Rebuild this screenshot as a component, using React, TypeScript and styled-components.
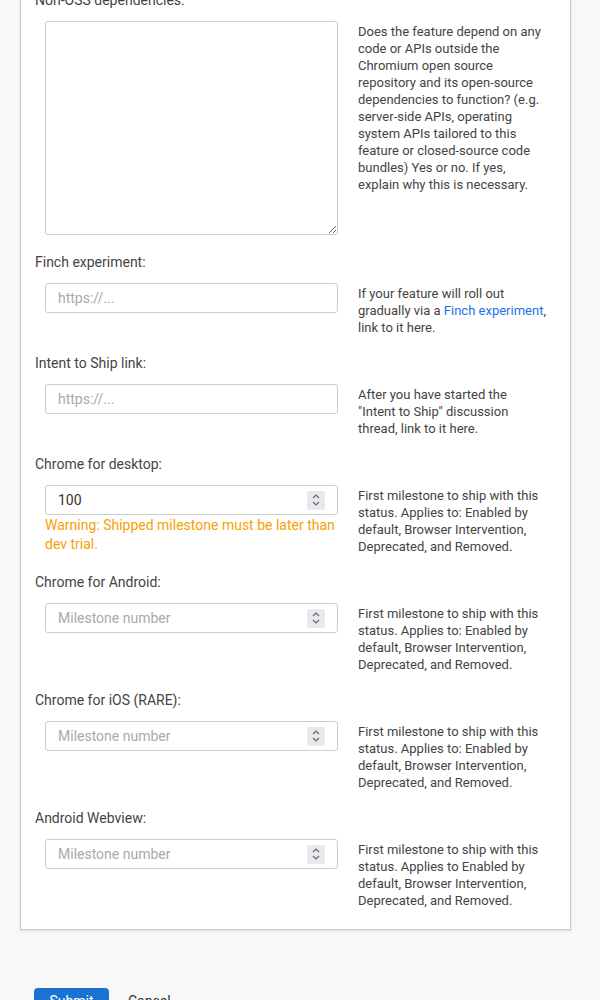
import React from "react";
import styled, { createGlobalStyle } from "styled-components";

const GlobalStyle = createGlobalStyle`
  html, body {
    margin: 0;
    padding: 0;
    background: #f8f8f8;
    font-family: Roboto, "Liberation Sans", Arial, sans-serif;
    color: #444;
  }
  * { box-sizing: border-box; }
`;

const Page = styled.div`
  padding: 0 29px 40px 20px;
  overflow: hidden;
  height: 1000px;
`;

const Card = styled.section`
  margin-top: -27px;
  background: #fff;
  border: 1px solid #ccc;
  box-shadow: 0 1px 2px rgba(0, 0, 0, 0.12);
  padding: 16px 14px 20px 14px;
  display: flex;
  flex-direction: column;
  gap: 17px;
`;

const Field = styled.div`
  display: flex;
  flex-direction: column;
  gap: 11px;
`;

const Label = styled.label`
  font-size: 14px;
  line-height: 20px;
  color: #444;
`;

const Row = styled.div`
  display: grid;
  grid-template-columns: 293px 188px;
  column-gap: 20px;
  padding-left: 10px;
  align-items: start;
`;

const Control = styled.div`
  display: flex;
  flex-direction: column;
`;

const TextArea = styled.textarea`
  width: 293px;
  height: 214px;
  border: 1px solid #ccc;
  border-radius: 3px;
  font: inherit;
  font-size: 13px;
  padding: 6px 12px;
  resize: vertical;
  outline: none;
`;

const Input = styled.input`
  width: 293px;
  height: 30px;
  border: 1px solid #ccc;
  border-radius: 3px;
  font: inherit;
  font-size: 14px;
  color: #333;
  padding: 0 12px;
  outline: none;
  &::placeholder { color: #aaa; }
`;

const NumberBox = styled.div`
  width: 293px;
  height: 30px;
  border: 1px solid #ccc;
  border-radius: 3px;
  display: flex;
  align-items: center;
  padding: 0 12px 0 12px;
`;

const NumberInput = styled.input`
  flex: 1;
  min-width: 0;
  border: none;
  outline: none;
  font: inherit;
  font-size: 14px;
  color: #333;
  padding: 0;
  &::placeholder { color: #aaa; }
`;

const Spinner = styled.span`
  width: 18px;
  height: 19px;
  background: #e9e9ed;
  border-radius: 2px;
  display: flex;
  align-items: center;
  justify-content: center;
`;

const Help = styled.div`
  font-size: 13px;
  line-height: 17px;
  padding-top: 2px;
  color: #444;
`;

const NoWrap = styled.span`
  white-space: nowrap;
`;

const Link = styled.a`
  color: #1a73e8;
  text-decoration: none;
`;

const Warning = styled.div`
  color: #f9a000;
  font-size: 14px;
  line-height: 19px;
  padding-top: 1px;
`;

const Actions = styled.div`
  margin-top: 58px;
  padding-left: 14px;
  display: flex;
  align-items: flex-start;
  gap: 19px;
`;

const Submit = styled.button`
  background: #1a73d2;
  color: #fff;
  border: none;
  border-radius: 4px;
  height: 30px;
  width: 75px;
  padding: 3px 0 0;
  display: flex;
  justify-content: center;
  align-items: flex-start;
  font: inherit;
  font-size: 14px;
  line-height: 20px;
`;

const Cancel = styled.button`
  background: none;
  border: none;
  color: #333;
  font: inherit;
  font-size: 14px;
  line-height: 20px;
  padding: 3px 0 0;
`;

const SpinIcon = () => (
  <Spinner>
    <svg width="10" height="14" viewBox="0 0 10 14" fill="none" stroke="#666" strokeWidth="1.2">
      <path d="M2 5 L5 2 L8 5" />
      <path d="M2 9 L5 12 L8 9" />
    </svg>
  </Spinner>
);

const milestoneHelp =
  "First milestone to ship with this status. Applies to: Enabled by default, Browser Intervention, Deprecated, and Removed.";

const milestones = [
  { label: "Chrome for Android:", help: milestoneHelp },
  { label: "Chrome for iOS (RARE):", help: milestoneHelp },
  {
    label: "Android Webview:",
    help: "First milestone to ship with this status. Applies to Enabled by default, Browser Intervention, Deprecated, and Removed.",
  },
];

export default function App() {
  return (
    <Page>
      <GlobalStyle />
      <Card>
        <Field>
          <Label>Non-OSS dependencies:</Label>
          <Row>
            <TextArea />
            <Help>
              Does the feature depend on any code or APIs outside the Chromium
              open source repository and its open-source dependencies to
              function? (e.g. server-side APIs, operating system APIs tailored
              to this feature or closed-source code bundles) Yes or no. If yes,
              explain why this is necessary.
            </Help>
          </Row>
        </Field>

        <Field>
          <Label>Finch experiment:</Label>
          <Row>
            <Input placeholder="https://..." />
            <Help>
              If your feature will roll out{" "}
              <NoWrap>
                gradually via a <Link href="#">Finch experiment</Link>,
              </NoWrap>{" "}
              link to it here.
            </Help>
          </Row>
        </Field>

        <Field>
          <Label>Intent to Ship link:</Label>
          <Row>
            <Input placeholder="https://..." />
            <Help>
              After you have started the "Intent to Ship" discussion thread,
              link to it here.
            </Help>
          </Row>
        </Field>

        <Field>
          <Label>Chrome for desktop:</Label>
          <Row>
            <Control>
              <NumberBox>
                <NumberInput defaultValue="100" />
                <SpinIcon />
              </NumberBox>
              <Warning>
                Warning: Shipped milestone must be later than dev trial.
              </Warning>
            </Control>
            <Help>{milestoneHelp}</Help>
          </Row>
        </Field>

        {milestones.map((m) => (
          <Field key={m.label}>
            <Label>{m.label}</Label>
            <Row>
              <NumberBox>
                <NumberInput placeholder="Milestone number" />
                <SpinIcon />
              </NumberBox>
              <Help>{m.help}</Help>
            </Row>
          </Field>
        ))}
      </Card>
      <Actions>
        <Submit>Submit</Submit>
        <Cancel>Cancel</Cancel>
      </Actions>
    </Page>
  );
}
